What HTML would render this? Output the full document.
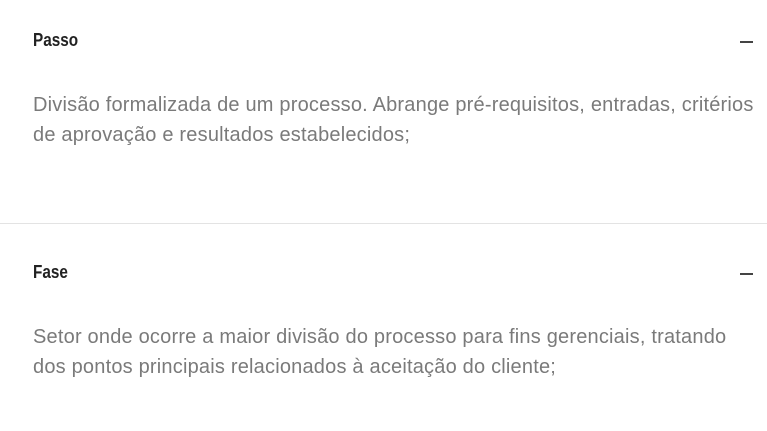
<!DOCTYPE html>
<html><head><meta charset="utf-8"><style>
body{margin:0;width:767px;height:431px;background:#fff;overflow:hidden;position:relative;font-family:"Liberation Sans",sans-serif}
.t{position:absolute;left:33px;font-weight:bold;font-size:18px;color:#222;line-height:20px;transform:scaleX(0.85);transform-origin:0 0}
.m{position:absolute;left:740px;width:13px;height:2px;background:#444}
.p{position:absolute;left:33px;font-size:20px;color:#7a7a7a;line-height:30px;white-space:nowrap;letter-spacing:0.2px}
.hr{position:absolute;left:0;top:223px;width:767px;height:1px;background:#e3e3e3}
</style></head><body>
<div class="t" style="top:30px">Passo</div>
<div class="m" style="top:41px"></div>
<div class="p" style="top:90px">Divisão formalizada de um processo. Abrange pré-requisitos, entradas, critérios<br>de aprovação e resultados estabelecidos;</div>
<div class="hr"></div>
<div class="t" style="top:262px">Fase</div>
<div class="m" style="top:273px"></div>
<div class="p" style="top:322px">Setor onde ocorre a maior divisão do processo para fins gerenciais, tratando<br>dos pontos principais relacionados à aceitação do cliente;</div>
</body></html>
